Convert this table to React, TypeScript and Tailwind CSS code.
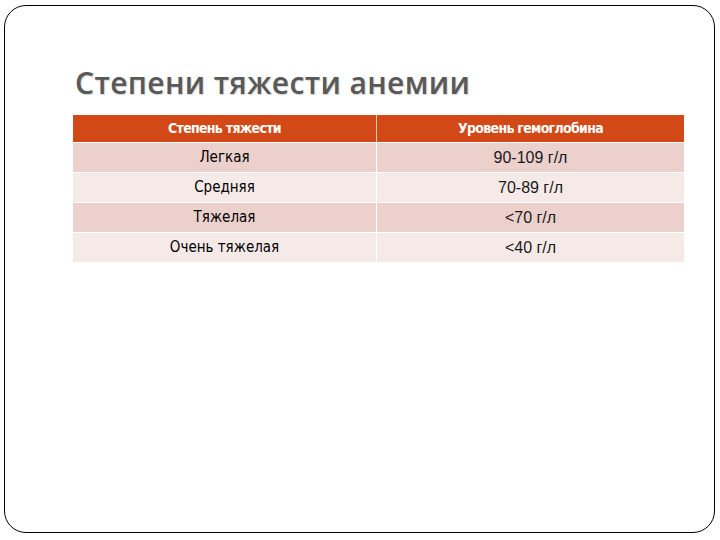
import React from "react";

const rows = [
  { grade: "Легкая", level: "90-109 г/л" },
  { grade: "Средняя", level: "70-89 г/л" },
  { grade: "Тяжелая", level: "<70 г/л" },
  { grade: "Очень тяжелая", level: "<40 г/л" },
];

const narrow = { fontFamily: '"DejaVu Sans Condensed", "DejaVu Sans", sans-serif', fontStretch: "condensed" };

const App = () => {
  return (
    <div className="w-[720px] h-[540px] bg-white pt-[5px] pl-[4px]">
      <div className="w-[711px] h-[528px] border border-black rounded-[22px] pl-[68px] pt-[59px]">
        <h1
          className="text-[30px] leading-[36px] font-semibold text-[#595959] tracking-[0.4px] pl-[2px]"
          style={{ fontFamily: '"Open Sans", "Noto Sans", sans-serif', textShadow: "1px 1px 1px rgba(0,0,0,0.18)" }}
        >
          Степени тяжести анемии
        </h1>
        <div className="mt-[14px] w-[611px] flex flex-col gap-[1px] bg-white">
          <div className="flex h-[27px] bg-[#D24816] text-white text-[14px] font-bold tracking-[-0.7px]">
            <div className="w-[304px] flex items-center justify-center border-r border-[#f4c9a8]" style={narrow}>
              Степень тяжести
            </div>
            <div className="flex-1 flex items-center justify-center" style={narrow}>
              Уровень гемоглобина
            </div>
          </div>
          {rows.map((r, i) => (
            <div
              key={r.grade}
              className={`flex h-[29px] text-black ${i % 2 === 0 ? "bg-[#EBD0CC]" : "bg-[#F6EAE9]"}`}
            >
              <div className="w-[304px] flex items-center justify-center border-r border-white text-[15px]" style={narrow}>
                {r.grade}
              </div>
              <div
                className="flex-1 flex items-center justify-center text-[16px] text-[#1a1a1a]"
                style={{ fontFamily: '"Liberation Sans", Arial, sans-serif' }}
              >
                {r.level}
              </div>
            </div>
          ))}
        </div>
      </div>
    </div>
  );
};

export default App;
